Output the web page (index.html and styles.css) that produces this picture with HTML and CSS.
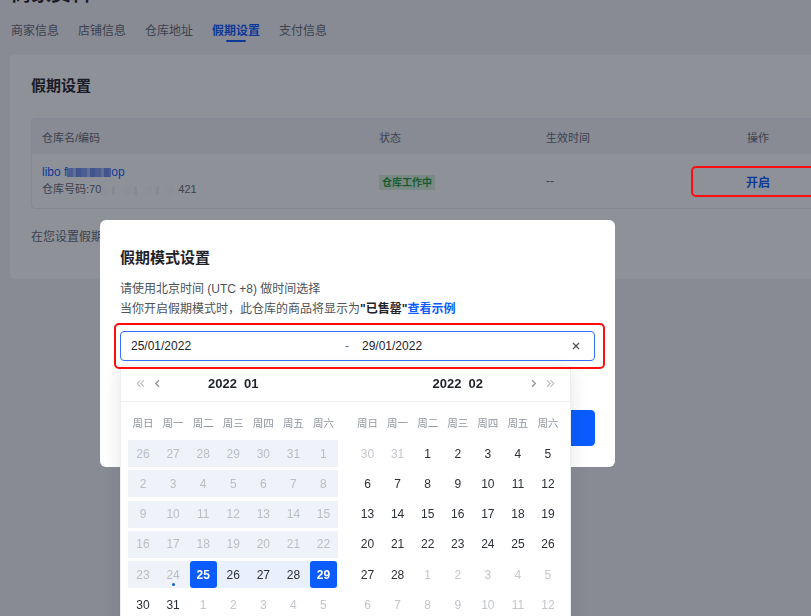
FILE: index.html
```html
<!DOCTYPE html>
<html lang="zh-CN">
<head>
<meta charset="utf-8">
<title>商家资料 - 假期设置</title>
<link rel="stylesheet" href="styles.css">
</head>
<body>
<div class="page">
  <h1 class="page-title">商家资料</h1>
  <nav class="tabs">
    <a class="tab">商家信息</a>
    <a class="tab">店铺信息</a>
    <a class="tab">仓库地址</a>
    <a class="tab active">假期设置</a>
    <a class="tab">支付信息</a>
  </nav>

  <section class="card">
    <h2 class="card-title">假期设置</h2>
    <div class="table">
      <div class="tr th">
        <div class="c">仓库名/编码</div>
        <div class="c">状态</div>
        <div class="c">生效时间</div>
        <div class="c c-op">操作</div>
      </div>
      <div class="tr td">
        <div class="c c-name">
          <div class="wh-name">libo f<span class="redact redact-blue"></span>op</div>
          <div class="wh-code">仓库号码:70<span class="redact redact-light"></span>421</div>
        </div>
        <div class="c"><span class="badge">仓库工作中</span></div>
        <div class="c c-time">--</div>
        <div class="c c-op mark"><a class="op-link">开启</a></div>
      </div>
    </div>
    <p class="note">在您设置假期模式后，该仓库的商品将在所选时间段内显示为已售罄</p>
  </section>
</div>

<div class="mask"></div>

<div class="dialog">
  <h3 class="dialog-title">假期模式设置</h3>
  <div class="dialog-desc">
    <p>请使用北京时间 (UTC +8) 做时间选择</p>
    <p>当你开启假期模式时，此仓库的商品将显示为<b class="em">"已售罄"</b><a class="link">查看示例</a></p>
  </div>

  <div class="picker">
    <div class="picker-input">
      <span class="picker-val">25/01/2022</span>
      <span class="picker-sep">-</span>
      <span class="picker-val">29/01/2022</span>
      <span class="picker-clear">
        <svg width="8" height="8" viewBox="0 0 8 8"><path d="M1 1l6 6M7 1L1 7" stroke="#4e5359" stroke-width="1.3" fill="none"/></svg>
      </span>
    </div>

    <div class="calendar">
      <div class="cal-panel">
        <div class="cal-head">
          <div class="cal-nav">
            <svg width="9" height="9" viewBox="0 0 9 9"><path d="M4.5 1.2 1.3 4.5l3.2 3.3M8 1.2 4.8 4.5 8 7.8" fill="none" stroke="#b9bdc4" stroke-width="1.1"/></svg>
            <svg width="6" height="9" viewBox="0 0 6 9"><path d="M5 1.2 1.6 4.5 5 7.8" fill="none" stroke="#8a9099" stroke-width="1.2"/></svg>
          </div>
          <div class="cal-title">2022&nbsp;&nbsp;01</div>
          <div></div>
        </div>
        <div class="cal-body">
          <div class="week"><span>周日</span><span>周一</span><span>周二</span><span>周三</span><span>周四</span><span>周五</span><span>周六</span></div>
          <div class="days"><span class="d dis">26</span><span class="d dis">27</span><span class="d dis">28</span><span class="d dis">29</span><span class="d dis">30</span><span class="d dis">31</span><span class="d dis">1</span></div>
          <div class="days"><span class="d dis">2</span><span class="d dis">3</span><span class="d dis">4</span><span class="d dis">5</span><span class="d dis">6</span><span class="d dis">7</span><span class="d dis">8</span></div>
          <div class="days"><span class="d dis">9</span><span class="d dis">10</span><span class="d dis">11</span><span class="d dis">12</span><span class="d dis">13</span><span class="d dis">14</span><span class="d dis">15</span></div>
          <div class="days"><span class="d dis">16</span><span class="d dis">17</span><span class="d dis">18</span><span class="d dis">19</span><span class="d dis">20</span><span class="d dis">21</span><span class="d dis">22</span></div>
          <div class="days"><span class="d dis">23</span><span class="d dis today">24</span><span class="d sel start"><i>25</i></span><span class="d between">26</span><span class="d between">27</span><span class="d between">28</span><span class="d sel end"><i>29</i></span></div>
          <div class="days"><span class="d">30</span><span class="d">31</span><span class="d out">1</span><span class="d out">2</span><span class="d out">3</span><span class="d out">4</span><span class="d out">5</span></div>
        </div>
      </div>

      <div class="cal-panel">
        <div class="cal-head">
          <div></div>
          <div class="cal-title">2022&nbsp;&nbsp;02</div>
          <div class="cal-nav right">
            <svg width="6" height="9" viewBox="0 0 6 9"><path d="M1 1.2 4.4 4.5 1 7.8" fill="none" stroke="#8a9099" stroke-width="1.2"/></svg>
            <svg width="9" height="9" viewBox="0 0 9 9"><path d="M1 1.2 4.2 4.5 1 7.8M4.5 1.2l3.2 3.3-3.2 3.3" fill="none" stroke="#b9bdc4" stroke-width="1.1"/></svg>
          </div>
        </div>
        <div class="cal-body">
          <div class="week"><span>周日</span><span>周一</span><span>周二</span><span>周三</span><span>周四</span><span>周五</span><span>周六</span></div>
          <div class="days"><span class="d out">30</span><span class="d out">31</span><span class="d">1</span><span class="d">2</span><span class="d">3</span><span class="d">4</span><span class="d">5</span></div>
          <div class="days"><span class="d">6</span><span class="d">7</span><span class="d">8</span><span class="d">9</span><span class="d">10</span><span class="d">11</span><span class="d">12</span></div>
          <div class="days"><span class="d">13</span><span class="d">14</span><span class="d">15</span><span class="d">16</span><span class="d">17</span><span class="d">18</span><span class="d">19</span></div>
          <div class="days"><span class="d">20</span><span class="d">21</span><span class="d">22</span><span class="d">23</span><span class="d">24</span><span class="d">25</span><span class="d">26</span></div>
          <div class="days"><span class="d">27</span><span class="d">28</span><span class="d out">1</span><span class="d out">2</span><span class="d out">3</span><span class="d out">4</span><span class="d out">5</span></div>
          <div class="days"><span class="d out">6</span><span class="d out">7</span><span class="d out">8</span><span class="d out">9</span><span class="d out">10</span><span class="d out">11</span><span class="d out">12</span></div>
        </div>
      </div>
    </div>
  </div>

  <div class="dialog-foot">
    <button class="btn">取消</button>
    <button class="btn primary">确定</button>
  </div>
</div>
</body>
</html>
```

FILE: styles.css
```css
* {
  box-sizing: border-box;
  margin: 0;
  padding: 0;
}

html,
body {
  width: 811px;
  height: 616px;
  overflow: hidden;
}

body {
  position: relative;
  font-family: "Liberation Sans", "Noto Sans CJK SC", sans-serif;
  background: #f2f3f5;
  color: #1f2329;
}

a {
  cursor: pointer;
}

/* ---------- page behind the dialog ---------- */

.page {
  width: 846px;
}

.page-title {
  margin-top: -20px;
  padding-left: 11px;
  font-size: 20px;
  line-height: 28px;
  font-weight: 700;
}

.tabs {
  display: flex;
  gap: 19px;
  margin-top: 13px;
  padding-left: 11px;
}

.tab {
  position: relative;
  font-size: 12px;
  line-height: 20px;
  color: #646a73;
}

.tab.active {
  color: #0a5cff;
  font-weight: 700;
}

.tab.active::after {
  content: "";
  position: absolute;
  left: 50%;
  bottom: -1px;
  width: 20px;
  height: 2px;
  margin-left: -10px;
  border-radius: 1px;
  background: #0a5cff;
}

.card {
  margin: 14px 0 0 10px;
  padding: 20px 10px 33px 21px;
  background: #fff;
  border-radius: 4px;
}

.card-title {
  font-size: 15px;
  line-height: 22px;
  font-weight: 700;
}

.table {
  width: 785px;
  margin-top: 21px;
  border: 1px solid #eceef1;
  border-radius: 4px;
}

.tr {
  display: grid;
  grid-template-columns: 337px 167px 165px 1fr;
  align-items: center;
}

.th {
  height: 35px;
  background: #f1f2f5;
  font-size: 11px;
  color: #646a73;
}

.td {
  height: 54px;
}

.c {
  padding-left: 10px;
}

.c-op {
  padding-left: 0;
  text-align: center;
}

.wh-name {
  font-size: 12px;
  line-height: 17px;
  color: #0a5cff;
}

.wh-code {
  font-size: 11px;
  line-height: 17px;
  color: #646a73;
}

.redact {
  display: inline-block;
  vertical-align: middle;
  height: 9px;
}

.redact-blue {
  width: 44px;
  background:
    repeating-linear-gradient(90deg, #7f9ef0 0 6px, #a9bff7 6px 9px, #6d8fe8 9px 14px);
}

.redact-light {
  width: 77px;
  background:
    repeating-linear-gradient(90deg, #fbfbfc 0 7px, #ffffff 7px 11px, #f0f1f3 11px 14px, #ffffff 14px 22px);
}

.badge {
  display: inline-block;
  padding: 0 3px;
  font-size: 10px;
  line-height: 15px;
  font-weight: 700;
  color: #1e9e3c;
  background: #d7f0dc;
}

.c-time {
  font-size: 12px;
  color: #646a73;
}

.op-link {
  font-size: 12px;
  font-weight: 700;
  color: #0a5cff;
}

/* red review annotation around the action cell */
.mark {
  position: relative;
  align-self: stretch;
  display: flex;
  align-items: center;
  justify-content: center;
}

.mark::after {
  content: "";
  position: absolute;
  z-index: 30;
  left: -10px;
  right: -40px;
  top: 12px;
  bottom: 11px;
  border: 2px solid #ff0d0d;
  border-radius: 5px;
}

.note {
  margin-top: 19px;
  font-size: 12px;
  line-height: 18px;
  color: #646a73;
}

/* ---------- modal ---------- */

.mask {
  position: fixed;
  inset: 0;
  z-index: 10;
  background: rgba(16, 22, 38, 0.47);
}

.dialog {
  position: absolute;
  z-index: 20;
  left: 100px;
  top: 220px;
  width: 515px;
  padding: 26px 20px 21px;
  background: #fff;
  border-radius: 6px;
}

.dialog-title {
  font-size: 15px;
  line-height: 24px;
  font-weight: 700;
  color: #1f2329;
}

.dialog-desc {
  margin-top: 9px;
  font-size: 12px;
  line-height: 20px;
  color: #4e5359;
}

.dialog-desc .em {
  color: #1f2329;
}

.dialog-desc .link {
  font-weight: 700;
  color: #0a5cff;
}

.picker {
  position: relative;
  margin-top: 12px;
}

/* red review annotation around the date range */
.picker::after {
  content: "";
  position: absolute;
  z-index: 40;
  left: -6px;
  right: -10px;
  top: -8px;
  bottom: -8px;
  border: 2px solid #ff0d0d;
  border-radius: 5px;
  pointer-events: none;
}

.picker-input {
  display: grid;
  grid-template-columns: 208px 23px 1fr 10px;
  align-items: center;
  height: 30px;
  padding: 0 12px 0 10px;
  border: 1px solid #3370ff;
  border-radius: 4px;
  font-size: 12px;
  color: #1f2329;
}

.picker-sep {
  padding-left: 6px;
  color: #646a73;
}

.picker-clear {
  display: flex;
  align-items: center;
}

.calendar {
  position: absolute;
  z-index: 30;
  left: 0;
  top: calc(100% + 4px);
  display: grid;
  grid-template-columns: 1fr 1fr;
  width: 451px;
  height: 300px;
  background: #fff;
  border: 1px solid #eceef2;
  border-radius: 4px;
  box-shadow: 0 6px 18px rgba(31, 35, 41, 0.12);
}

.cal-head {
  display: grid;
  grid-template-columns: 1fr auto 1fr;
  align-items: center;
  height: 36px;
  padding: 0 15px;
  border-bottom: 1px solid #eef0f3;
}

.cal-nav {
  display: flex;
  align-items: center;
  gap: 9px;
}

.cal-nav.right {
  justify-content: flex-end;
}

.cal-title {
  font-size: 13px;
  font-weight: 700;
  color: #1f2329;
}

.cal-body {
  padding: 9px 7px 0;
}

.week,
.days {
  display: grid;
  grid-template-columns: repeat(7, 1fr);
}

.week {
  height: 24px;
  margin-bottom: 5px;
  font-size: 10.5px;
  line-height: 24px;
  text-align: center;
  color: #8f959e;
}

.days {
  height: 27px;
  margin-bottom: 3.3px;
}

.d {
  position: relative;
  display: flex;
  align-items: center;
  justify-content: center;
  font-size: 12px;
  color: #2b2f36;
}

.d.dis {
  color: #babec5;
  background: #eff2f8;
}

.d.out {
  color: #c3c6cc;
}

.d.between,
.d.sel {
  background: #e8effd;
}

.d.sel.start {
  background: linear-gradient(90deg, #eff2f8 50%, #e8effd 50%);
}

.d.sel.end {
  background: linear-gradient(90deg, #e8effd 50%, #eff2f8 50%);
}

.d.sel i {
  display: flex;
  align-items: center;
  justify-content: center;
  width: 27px;
  height: 27px;
  font-style: normal;
  font-weight: 700;
  color: #fff;
  background: #0a5cff;
  border-radius: 3px;
}

.d.today::after {
  content: "";
  position: absolute;
  left: 50%;
  bottom: 2px;
  width: 3px;
  height: 3px;
  margin-left: -1.5px;
  border-radius: 50%;
  background: #0a5cff;
}

.dialog-foot {
  display: flex;
  justify-content: flex-end;
  gap: 12px;
  margin-top: 49px;
}

.btn {
  height: 36px;
  padding: 0 23px;
  font-family: inherit;
  font-size: 13px;
  color: #1f2329;
  background: #fff;
  border: 1px solid #d0d3d6;
  border-radius: 4px;
}

.btn.primary {
  color: #fff;
  background: #0a5cff;
  border-color: #0a5cff;
}
```
